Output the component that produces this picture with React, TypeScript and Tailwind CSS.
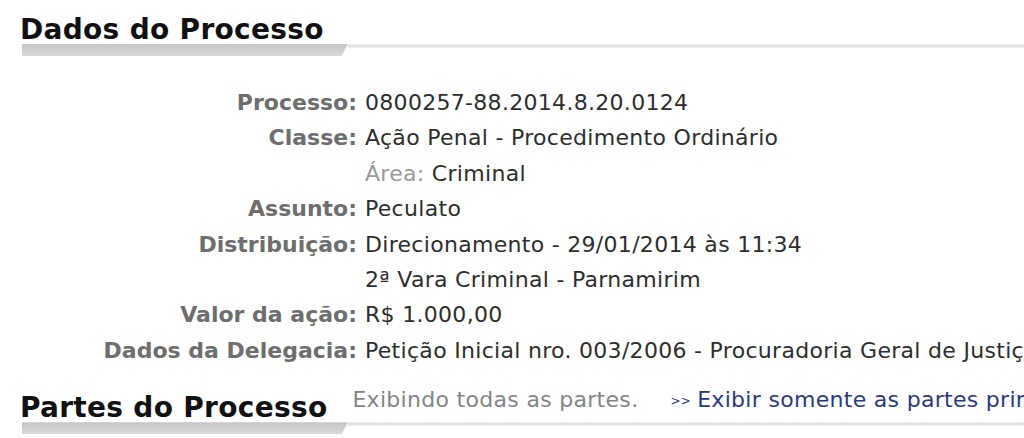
const rows: { label: string; value: React.ReactNode }[] = [
  { label: 'Processo:', value: '0800257-88.2014.8.20.0124' },
  { label: 'Classe:', value: 'Ação Penal - Procedimento Ordinário' },
  {
    label: '',
    value: (
      <>
        <span className="text-[#9a9a9a]">Área:</span> Criminal
      </>
    ),
  },
  { label: 'Assunto:', value: 'Peculato' },
  { label: 'Distribuição:', value: 'Direcionamento - 29/01/2014 às 11:34' },
  { label: '', value: '2ª Vara Criminal - Parnamirim' },
  { label: 'Valor da ação:', value: 'R$ 1.000,00' },
  { label: 'Dados da Delegacia:', value: 'Petição Inicial nro. 003/2006 - Procuradoria Geral de Justiça' },
];

function SectionBar() {
  return (
    <div className="flex items-start">
      <div className="ml-[22px] w-[326px] h-[12px] bg-gradient-to-b from-[#c6c6c6] to-[#d9d9d9] [clip-path:polygon(0_0,100%_0,98%_100%,0_100%)]" />
      <div className="flex-1 h-[4px] bg-gradient-to-b from-[#f1f1f1] via-[#dddddd] to-[#f3f3f3]" />
    </div>
  );
}

export default function App() {
  return (
    <div className="w-[1024px] h-[438px] bg-white overflow-hidden font-['DejaVu_Sans',Verdana,sans-serif]">
      {/* Dados do Processo */}
      <h2 className="pt-[16px] pl-[20px] text-[28px] leading-[28px] tracking-[0.3px] font-bold text-[#111]">
        Dados do Processo
      </h2>
      <SectionBar />

      <div className="mt-[29px] grid grid-cols-[357px_1fr] gap-x-[8px] text-[22px] leading-[35.4px] whitespace-nowrap">
        {rows.map((r, i) => (
          <div key={i} className="contents">
            <div className="text-right font-bold text-[#6e6e6e]">{r.label}</div>
            <div className="text-[#2e2e2e] tracking-[0.3px]">{r.value}</div>
          </div>
        ))}
      </div>

      {/* Partes do Processo */}
      <div className="mt-[26px] flex items-start whitespace-nowrap">
        <h2 className="pl-[20px] text-[28px] leading-[28px] tracking-[0.3px] font-bold text-[#111] shrink-0">
          Partes do Processo
        </h2>
        <span className="ml-[25px] -mt-[5px] text-[22px] leading-[22px] tracking-[0.3px] text-[#858585] shrink-0">
          Exibindo todas as partes.
        </span>
        <a className="ml-[32px] -mt-[5px] text-[22px] leading-[22px] tracking-[0.3px] text-[#2a3a7e] shrink-0" href="#">
          <span className="text-[12px] mr-[6px] align-middle">&gt;&gt;</span>Exibir somente as partes principais.
        </a>
      </div>
      <SectionBar />
    </div>
  );
}
